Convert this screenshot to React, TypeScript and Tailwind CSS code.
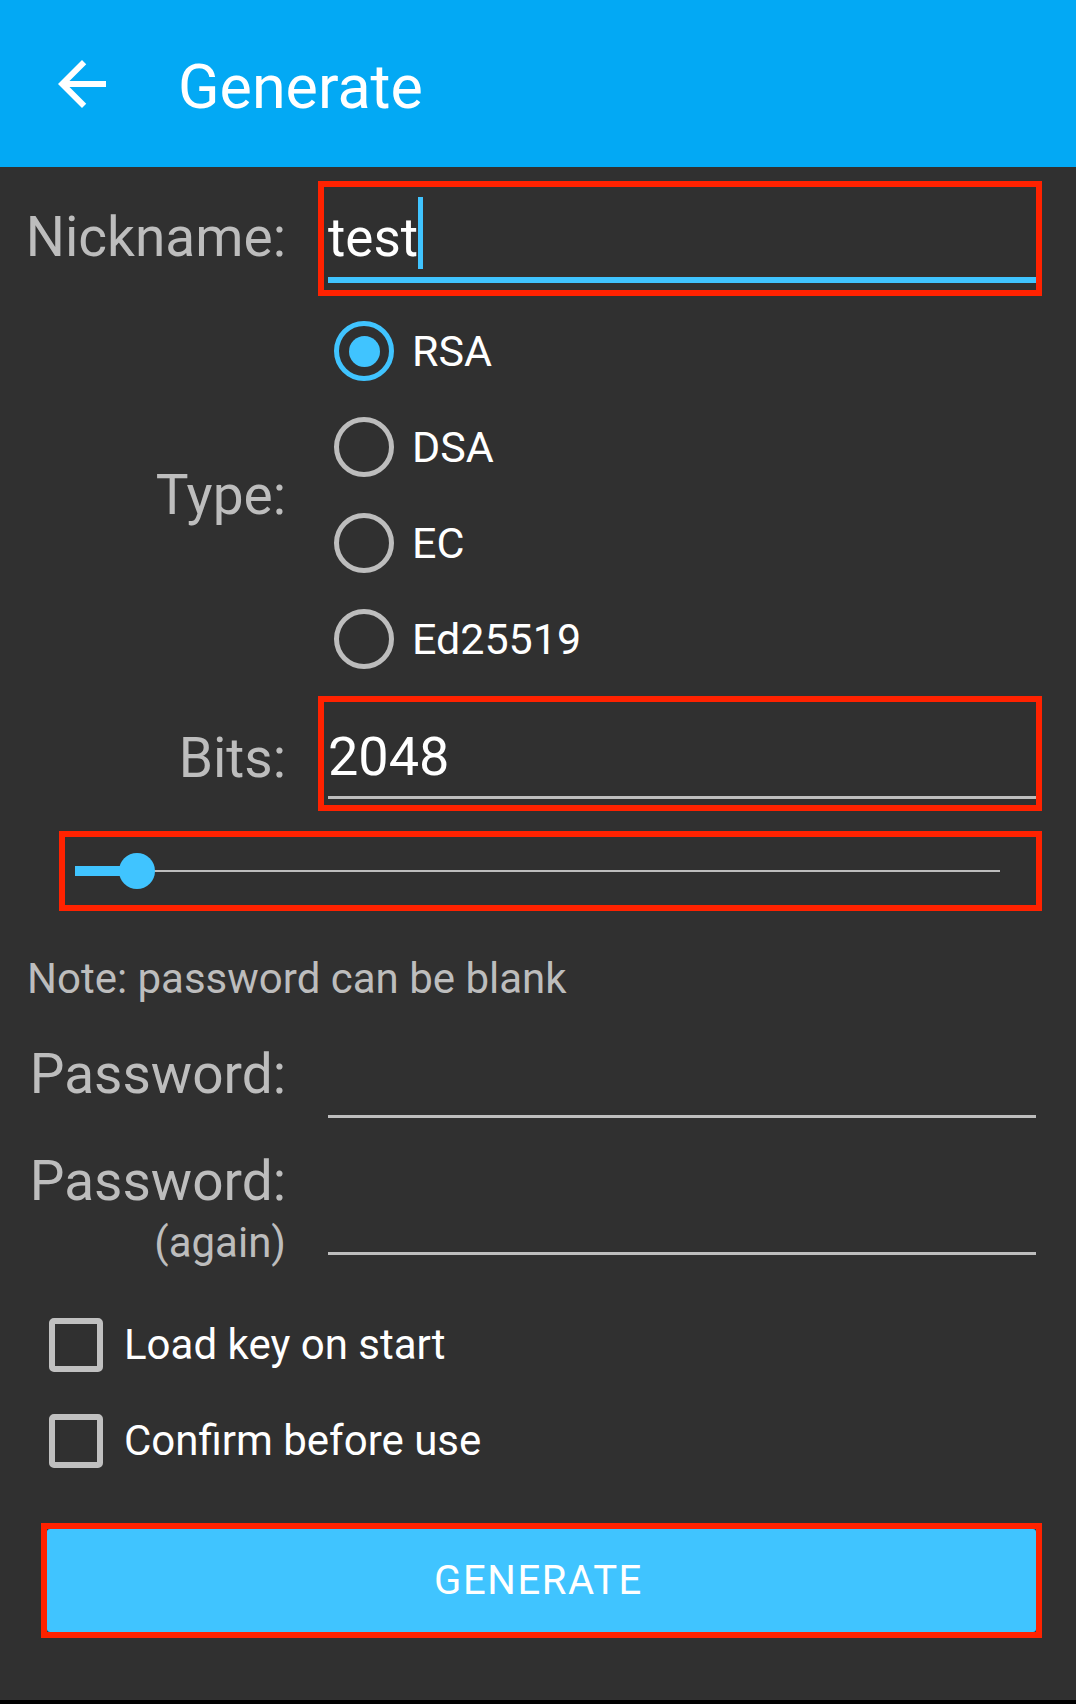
const Radio = ({ label, checked }: { label: string; checked?: boolean }) => {
  return (
    <div className="flex h-[96px] items-center pl-[16px]">
      <div
        className={
          checked
            ? "flex h-[60px] w-[60px] items-center justify-center rounded-full border-[5px] border-[#40c4ff]"
            : "flex h-[60px] w-[60px] items-center justify-center rounded-full border-[5px] border-[#bdbdbd]"
        }
      >
        {checked && <div className="h-[31px] w-[31px] rounded-full bg-[#40c4ff]" />}
      </div>
      <span className="ml-[18px] text-[43px] leading-[52px] text-white">{label}</span>
    </div>
  );
};

const Checkbox = ({ label }: { label: string }) => {
  return (
    <div className="flex h-[54px] items-center pl-[49px]">
      <div className="h-[54px] w-[54px] rounded-[5px] border-[6px] border-[#c0c0c0]" />
      <span className="ml-[21px] text-[42px] leading-[52px] text-white">{label}</span>
    </div>
  );
};

const labelCls = "w-[286px] shrink-0 text-right text-[55px] leading-[64px] text-[#bdbdbd]";

const App = () => {
  return (
    <div className="flex h-[1704px] w-[1076px] flex-col bg-[#303030] font-['Roboto',sans-serif]">
      {/* toolbar */}
      <div className="flex h-[167px] shrink-0 items-center bg-[#03a9f4]">
        <svg className="ml-[46px]" width="72" height="72" viewBox="0 0 24 24" fill="white">
          <path d="M20 11H7.83l5.59-5.59L12 4l-8 8 8 8 1.41-1.41L7.83 13H20v-2z" />
        </svg>
        <span className="ml-[60px] pt-[6px] text-[61px] leading-[72px] text-white">Generate</span>
      </div>

      {/* nickname */}
      <div className="mt-[14px] flex h-[115px]">
        <div className={labelCls + " pt-[24px]"}>Nickname:</div>
        <div className="ml-[32px] flex w-[724px] flex-col border-[6px] border-[#ff2200] pl-[4px] pt-[10px]">
          <div className="flex items-start">
            <span className="mt-[9px] text-[53px] leading-[64px] text-white">test</span>
            <span className="h-[72px] w-[5px] bg-[#40c4ff]" />
          </div>
          <div className="mt-[7px] h-[6px] bg-[#40c4ff]" />
        </div>
      </div>

      {/* type */}
      <div className="mt-[7px] flex">
        <div className={labelCls + " self-center"}>Type:</div>
        <div className="ml-[32px] flex flex-col">
          <Radio label="RSA" checked />
          <Radio label="DSA" />
          <Radio label="EC" />
          <Radio label="Ed25519" />
        </div>
      </div>

      {/* bits */}
      <div className="mt-[9px] flex h-[115px]">
        <div className={labelCls + " pt-[30px]"}>Bits:</div>
        <div className="ml-[32px] flex w-[724px] flex-col border-[6px] border-[#ff2200] pl-[4px] pt-[23px]">
          <span className="text-[54px] leading-[64px] text-white">2048</span>
          <div className="mt-[7px] h-[3px] bg-[#bdbdbd]" />
        </div>
      </div>

      {/* slider */}
      <div className="ml-[59px] mt-[20px] flex h-[80px] w-[983px] items-center border-[6px] border-[#ff2200]">
        <div className="relative ml-[10px] h-[2px] w-[925px] bg-[#bdbdbd]">
          <div className="absolute left-0 top-1/2 h-[10px] w-[62px] -translate-y-1/2 bg-[#40c4ff]" />
          <div className="absolute left-[44px] top-1/2 h-[36px] w-[36px] -translate-y-1/2 rounded-full bg-[#40c4ff]" />
        </div>
      </div>

      <div className="mt-[43px] pl-[27px] text-[42px] leading-[50px] text-[#bdbdbd]">
        Note: password can be blank
      </div>

      {/* password */}
      <div className="mt-[38px] flex h-[76px]">
        <div className={labelCls}>Password:</div>
        <div className="ml-[42px] mr-[40px] flex flex-1 flex-col justify-end">
          <div className="h-[3px] bg-[#bdbdbd]" />
        </div>
      </div>

      <div className="mt-[31px] flex h-[106px]">
        <div className="flex w-[286px] shrink-0 flex-col items-end text-[#bdbdbd]">
          <span className="text-[55px] leading-[64px]">Password:</span>
          <span className="mt-[5px] text-[42px] leading-[50px]">(again)</span>
        </div>
        <div className="ml-[42px] mr-[40px] flex flex-1 flex-col justify-end">
          <div className="h-[3px] bg-[#bdbdbd]" />
        </div>
      </div>

      <div className="mt-[63px]">
        <Checkbox label="Load key on start" />
      </div>
      <div className="mt-[42px]">
        <Checkbox label="Confirm before use" />
      </div>

      <div className="ml-[41px] mt-[55px] flex h-[115px] w-[1001px] border-[6px] border-[#ff2200]">
        <button className="flex flex-1 items-center justify-center rounded-[3px] bg-[#40c4ff] pr-[6px] text-[40px] leading-[48px] tracking-[1.6px] text-white">
          GENERATE
        </button>
      </div>

      <div className="flex-1" />
      <div className="h-[4px] bg-black" />
    </div>
  );
};

export default App;
